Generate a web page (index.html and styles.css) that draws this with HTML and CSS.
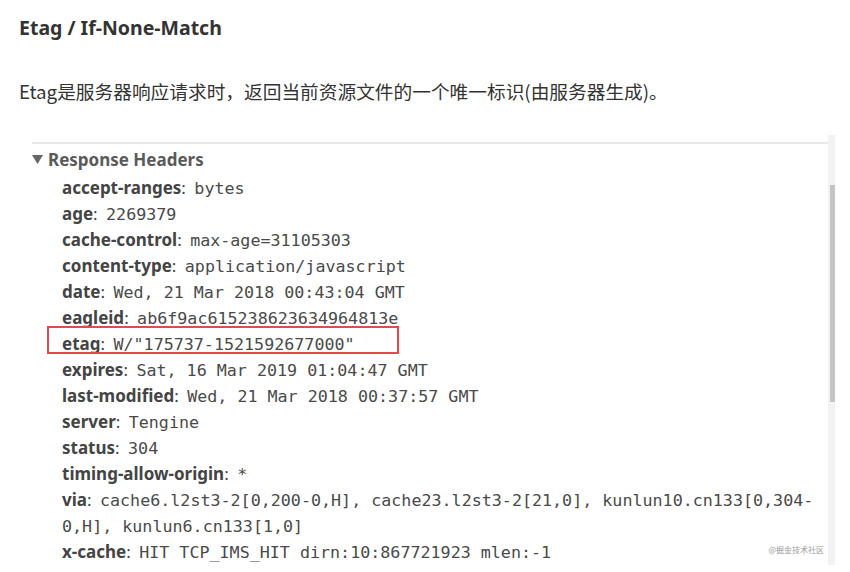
FILE: index.html
```html
<!DOCTYPE html>
<html lang="zh-CN">
<head>
<meta charset="utf-8">
<title>Etag / If-None-Match</title>
<link rel="stylesheet" href="styles.css">
</head>
<body>
<h3 class="title">Etag / If-None-Match</h3>
<p class="desc">Etag是服务器响应请求时，返回当前资源文件的一个唯一标识(由服务器生成)。</p>
<div class="shot">
  <div class="panel">
    <div class="rule"></div>
    <div class="section">
      <svg class="tri" width="11" height="9" viewBox="0 0 11 9"><path d="M0 0 H11 L5.5 9 Z" fill="#666"/></svg>
      <span>Response Headers</span>
    </div>
    <div class="rows">
      <div class="row"><b>accept-ranges</b>: <code>bytes</code></div>
      <div class="row"><b>age</b>: <code>2269379</code></div>
      <div class="row"><b>cache-control</b>: <code>max-age=31105303</code></div>
      <div class="row"><b>content-type</b>: <code>application/javascript</code></div>
      <div class="row"><b>date</b>: <code>Wed, 21 Mar 2018 00:43:04 GMT</code></div>
      <div class="row"><b>eagleid</b>: <code>ab6f9ac615238623634964813e</code></div>
      <div class="row marked"><b>etag</b>: <code>W/"175737-1521592677000"</code><span class="box"></span></div>
      <div class="row"><b>expires</b>: <code>Sat, 16 Mar 2019 01:04:47 GMT</code></div>
      <div class="row"><b>last-modified</b>: <code>Wed, 21 Mar 2018 00:37:57 GMT</code></div>
      <div class="row"><b>server</b>: <code>Tengine</code></div>
      <div class="row"><b>status</b>: <code>304</code></div>
      <div class="row"><b>timing-allow-origin</b>: <code>*</code></div>
      <div class="row tall"><b>via</b>: <code>cache6.l2st3-2[0,200-0,H], cache23.l2st3-2[21,0], kunlun10.cn133[0,304-<br>0,H], kunlun6.cn133[1,0]</code></div>
      <div class="row"><b>x-cache</b>: <code>HIT TCP_IMS_HIT dirn:10:867721923 mlen:-1</code></div>
    </div>
    <span class="mark">@掘金技术社区</span>
  </div>
  <div class="scrollbar"><div class="thumb"></div></div>
</div>
</body>
</html>
```

FILE: styles.css
```css
html, body {
  margin: 0;
  padding: 0;
  background: #fff;
}

body {
  font-family: "Noto Sans", "Noto Sans CJK SC", sans-serif;
  color: #333;
}

.title {
  margin: 0;
  padding: 15px 0 0 19px;
  font-size: 19.5px;
  line-height: 26px;
  font-weight: 700;
  color: #333;
}

.desc {
  margin: 0;
  padding: 36px 0 0 19px;
  font-family: "Noto Sans CJK SC", sans-serif;
  font-size: 18.7px;
  line-height: 28px;
  color: #333;
}

.shot {
  display: flex;
  margin: 30px 0 0 30px;
  width: 805px;
  height: 430px;
}

.panel {
  position: relative;
  flex: 1;
  padding-top: 7px;
}

.rule {
  height: 2px;
  margin-left: 2px;
  background: #e8e8e8;
}

.section {
  display: flex;
  align-items: center;
  height: 26px;
  margin-top: 2px;
  padding-left: 2px;
  font-size: 17px;
  font-weight: 700;
  color: #5a5a5a;
}

.tri {
  margin-right: 5px;
}

.rows {
  margin-top: 3px;
  padding-left: 32px;
}

.row {
  position: relative;
  height: 26px;
  line-height: 26px;
  font-size: 17px;
  color: #444;
  white-space: nowrap;
}

.row.tall {
  height: 52px;
}

.row b {
  font-weight: 700;
  color: #444;
}

.row code {
  margin-left: 4px;
  font-family: "DejaVu Sans Mono", monospace;
  font-size: 16.7px;
  line-height: 26px;
  color: #4a4a4a;
}

.row .box {
  position: absolute;
  left: -15px;
  top: -5px;
  width: 348px;
  height: 24px;
  border: 2px solid #e5484d;
}

.mark {
  position: absolute;
  right: 4px;
  bottom: 10px;
  font-family: "Noto Sans CJK SC", sans-serif;
  font-size: 8px;
  color: #999;
}

.scrollbar {
  width: 7px;
  background: #f2f2f2;
  padding-top: 50px;
}

.thumb {
  width: 5px;
  margin-left: 2px;
  height: 217px;
  background: #c4c4c4;
}
```
